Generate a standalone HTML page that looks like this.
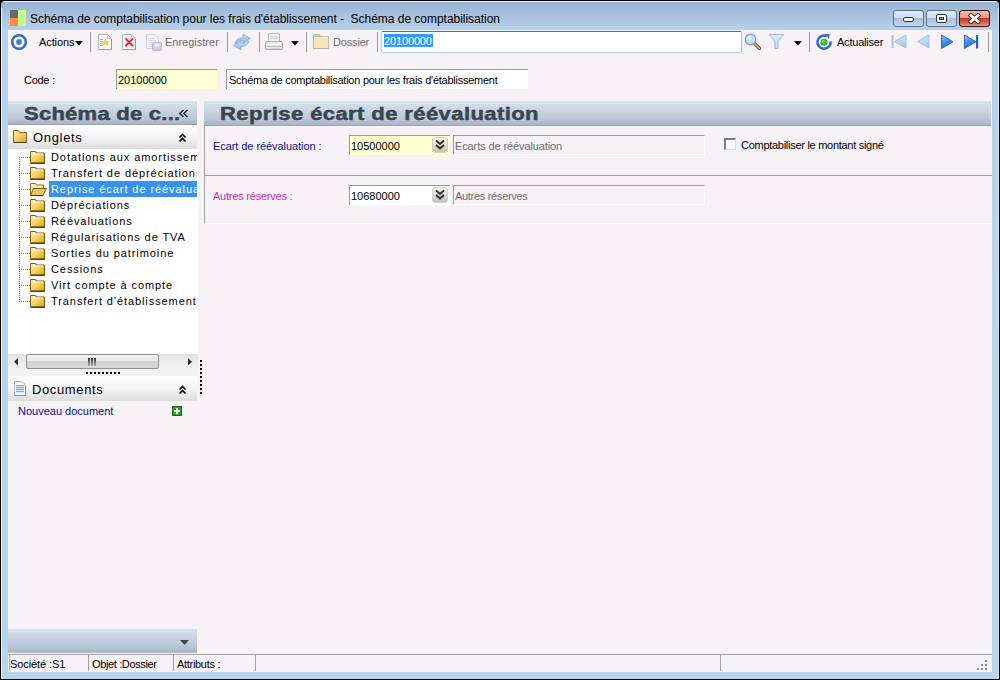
<!DOCTYPE html>
<html><head><meta charset="utf-8">
<style>
*{box-sizing:border-box;margin:0;padding:0}
html,body{width:1000px;height:680px;overflow:hidden;background:#000}
body{position:relative;font-family:"Liberation Sans",sans-serif;font-size:11px;color:#000}
.a{position:absolute}
.t{position:absolute;white-space:pre;line-height:1}
#win{left:0;top:0;width:1000px;height:680px;background:#000;border-radius:5px 5px 0 0}
#frame{left:1px;top:1px;width:998px;height:678px;border-radius:4px 4px 0 0;
 background:linear-gradient(#e8f4fb 0,#e8f4fb 1px,#98b3d4 1px,#a4bedc 12px,#b9d1ea 29px,#bcd3ec 100%);}
#client{left:8px;top:30px;width:984px;height:642px;background:#f6f2f6}
.sep{position:absolute;width:1px;background:#9a9a9a;top:32px;height:20px}
.tb{position:absolute;top:36px;font-size:11.5px;line-height:12px}
</style></head><body>
<div id="win" class="a"></div>
<div id="frame" class="a"></div>
<!-- left white highlight line of frame -->
<div class="a" style="left:1px;top:8px;width:1px;height:671px;background:#f0f8ff"></div>
<div class="a" style="left:998px;top:8px;width:1px;height:671px;background:#c8ecf8"></div>
<div class="a" style="left:1px;top:678px;width:998px;height:1px;background:#a8dcee"></div>

<!-- app icon -->
<div class="a" style="left:10px;top:10px;width:8px;height:8px;background:#6b6b6b"></div>
<div class="a" style="left:10px;top:18px;width:8px;height:8px;background:#ff8a4a"></div>
<div class="a" style="left:18px;top:10px;width:8px;height:16px;background:#c4ff84"></div>
<div class="t" style="left:30px;top:13px;font-size:12px;color:#000;letter-spacing:-0.03px">Schéma de comptabilisation pour les frais d'établissement -  Schéma de comptabilisation</div>

<!-- caption buttons -->
<div class="a" style="left:893px;top:10px;width:31px;height:17px;border:1px solid #5c7190;border-radius:3px;background:linear-gradient(#e4eefa,#cddcee 45%,#a8c0dc 50%,#b4cae4 75%,#c8dcf0)"></div>
<div class="a" style="left:903px;top:17px;width:11px;height:5px;border:1px solid #2c3440;background:#fff;border-radius:2px"></div>
<div class="a" style="left:926px;top:10px;width:31px;height:17px;border:1px solid #5c7190;border-radius:3px;background:linear-gradient(#e4eefa,#cddcee 45%,#a8c0dc 50%,#b4cae4 75%,#c8dcf0)"></div>
<div class="a" style="left:936px;top:14px;width:11px;height:9px;border:1px solid #2c3440;background:#fff;border-radius:2px"></div>
<div class="a" style="left:939px;top:17px;width:5px;height:3px;border:1px solid #2c3440;background:#8898a8"></div>
<div class="a" style="left:959px;top:10px;width:31px;height:17px;border:1px solid #3c1414;border-radius:3px;background:linear-gradient(#f0b8a8,#e8988a 45%,#c83a20 50%,#d0604a 75%,#e89080)"></div>
<svg class="a" style="left:968px;top:13px" width="13" height="11" viewBox="0 0 13 11"><path d="M3 2.5 L10 8.5 M10 2.5 L3 8.5" stroke="#3a2020" stroke-width="4.6" stroke-linecap="square"/><path d="M3 2.5 L10 8.5 M10 2.5 L3 8.5" stroke="#fff" stroke-width="2.8" stroke-linecap="square"/></svg>

<div id="client" class="a"></div>

<!-- TOOLBAR -->
<svg class="a" style="left:10px;top:33px" width="18" height="18" viewBox="0 0 18 18"><circle cx="9" cy="9" r="6.8" fill="#fff" stroke="#3a6cc0" stroke-width="2.6"/><circle cx="9" cy="9" r="2.9" fill="#3c7ede"/></svg>
<div class="tb" style="left:39px;font-size:11px;letter-spacing:-0.1px">Actions</div>
<svg class="a" style="left:75px;top:41px" width="9" height="6"><path d="M0 0h8l-4 4.5z" fill="#000"/></svg>
<div class="sep" style="left:90px"></div>
<div class="tb" style="left:165px;color:#6d6d6d;font-size:11px;letter-spacing:0px">Enregistrer</div>
<div class="sep" style="left:227px"></div>
<div class="sep" style="left:259px"></div>
<svg class="a" style="left:291px;top:41px" width="9" height="6"><path d="M0 0h8l-4 4.5z" fill="#000"/></svg>
<div class="sep" style="left:306px"></div>
<div class="tb" style="left:333px;color:#6d6d6d;font-size:11px;letter-spacing:-0.17px">Dossier</div>
<div class="sep" style="left:377px"></div>
<!-- search -->
<div class="a" style="left:380px;top:30px;width:363px;height:24px;border:1px solid #e4f2fa;border-radius:2px"></div><div class="a" style="left:381px;top:31px;width:361px;height:22px;background:#fff;border:1px solid #c4c8cc;border-top-color:#5d6f87;border-right-color:#a8c0d4;border-bottom-color:#b4d2e6;border-radius:2px"></div>
<div class="a" style="left:384px;top:34px;width:49px;height:13px;background:#3399ff"></div>
<div class="t" style="left:384px;top:36px;color:#fff;font-size:11px;letter-spacing:-0.14px">20100000</div>
<svg class="a" style="left:794px;top:41px" width="9" height="6"><path d="M0 0h8l-4 4.5z" fill="#000"/></svg>
<div class="sep" style="left:809px"></div>
<div class="tb" style="left:837px;font-size:11px;letter-spacing:-0.22px">Actualiser</div>
<div class="sep" style="left:988px"></div>
<!-- toolbar icons -->
<svg class="a" style="left:98px;top:34px" width="15" height="16" viewBox="0 0 15 16"><path d="M0.5 0.5 H9.5 L13.5 4.5 V15.5 H0.5 Z" fill="#f8faff" stroke="#b0b8cc"/><path d="M1 15.5 H14 M13.5 5 V15.5" stroke="#9a9a9a"/><path d="M9.5 0.5 V4.5 H13.5" fill="none" stroke="#c8d0e0"/><path d="M2 5.5h3 M2 7.5h3 M2 9.5h3 M2 11.5h3" stroke="#98b0e0"/><path d="M7.5 5 L8.6 7.3 L11 7.5 L9.2 9.1 L9.8 11.5 L7.5 10.3 L5.2 11.5 L5.8 9.1 L4 7.5 L6.4 7.3 Z" fill="#f0e040" stroke="#d8c428" stroke-width="0.5"/></svg>
<svg class="a" style="left:122px;top:34px" width="15" height="16" viewBox="0 0 15 16"><path d="M0.5 0.5 H9.5 L13.5 4.5 V15.5 H0.5 Z" fill="#f8faff" stroke="#b0b8cc"/><path d="M1 15.5 H14 M13.5 5 V15.5" stroke="#9a9a9a"/><path d="M9.5 0.5 V4.5 H13.5" fill="none" stroke="#c8d0e0"/><path d="M4 5 L10.5 11.5 M10.5 5 L4 11.5" stroke="#f6b0b0" stroke-width="3.4" stroke-linecap="round"/><path d="M4 5 L10.5 11.5 M10.5 5 L4 11.5" stroke="#d41818" stroke-width="1.3" stroke-linecap="round"/></svg>
<svg class="a" style="left:146px;top:34px" width="17" height="17" viewBox="0 0 17 17"><path d="M0.5 0.5 H9 L12.5 4 V14.5 H0.5 Z" fill="#f6f6fc" stroke="#d4d4e0"/><path d="M2 4.5h7 M2 6.5h8 M2 8.5h5 M2 10.5h5 M2 12.5h5" stroke="#d8dcec"/><rect x="6.5" y="8.5" width="9" height="8" rx="1" fill="#d0cce8" stroke="#bcb6d8"/><rect x="8.5" y="9.5" width="5" height="3" fill="#f0f0fa"/></svg>
<svg class="a" style="left:232px;top:33px" width="20" height="18" viewBox="0 0 20 18"><defs><linearGradient id="rg" x1="0" y1="0" x2="0" y2="1"><stop offset="0" stop-color="#c4dcf6"/><stop offset="1" stop-color="#90b8e8"/></linearGradient></defs><path d="M3 10.5 Q4 5 11 4.5 V1 L18.5 5.5 L11 10 V7.5 Q7 7.5 5.5 10.5 Z" fill="url(#rg)" stroke="#8ca8d0" stroke-width="0.8" stroke-linejoin="round"/><path d="M17 8 Q16 13 9 13.5 V17 L1.5 12.5 L9 8 V10.5 Q13 10.5 14.5 8 Z" fill="url(#rg)" stroke="#8ca8d0" stroke-width="0.8" stroke-linejoin="round"/></svg>
<svg class="a" style="left:264px;top:32px" width="20" height="19" viewBox="0 0 20 19"><rect x="4.5" y="1.5" width="11" height="9" fill="#f4f4f4" stroke="#bcbcbc"/><path d="M6 4.5 H14 M6 6.5 H14" stroke="#d0d0d0"/><path d="M1.5 11 Q1.5 9.5 3 9.5 H17 Q18.5 9.5 18.5 11 V16 Q18.5 17.5 17 17.5 H3 Q1.5 17.5 1.5 16 Z" fill="#e8e8e8" stroke="#a8a8a8"/><path d="M3 12.5 H17" stroke="#fff" stroke-width="1.5"/><path d="M3 14.5 H17" stroke="#b8b8b8"/><path d="M3 16.5 H17" stroke="#d4d4d4"/></svg>
<svg class="a" style="left:313px;top:34px" width="16" height="15" viewBox="0 0 16 15"><path d="M0.5 3 V1 Q0.5 0.5 1 0.5 H6.5 L7.5 3 Z" fill="#d8d4cc" stroke="#c0bab0"/><rect x="0.5" y="2.5" width="15" height="12" fill="#f6e4bc" stroke="#bcb4a4"/><path d="M1 3.5 H15" stroke="#fcf2dc"/></svg>
<svg class="a" style="left:744px;top:33px" width="18" height="17" viewBox="0 0 18 17"><path d="M10.5 10.5 L15.5 15.5" stroke="#6a5020" stroke-width="3.2" stroke-linecap="round"/><path d="M10.5 10.5 L15.5 15.5" stroke="#d8b870" stroke-width="1.6" stroke-linecap="round"/><circle cx="6.5" cy="6.5" r="5.3" fill="#c8dcf8" stroke="#7c9cd0" stroke-width="1.2"/><circle cx="5.5" cy="5" r="2" fill="#eef6ff"/></svg>
<svg class="a" style="left:769px;top:34px" width="16" height="16" viewBox="0 0 16 16"><path d="M0.5 0.5 H14.5 L9 7.5 V14.5 H6 V7.5 Z" fill="#d4e4fa" stroke="#9cb4d8"/><path d="M2.5 1.5 H12.5" stroke="#eef4ff"/></svg>
<svg class="a" style="left:815px;top:33px" width="18" height="18" viewBox="0 0 18 18"><circle cx="9" cy="9.2" r="5.2" fill="#e4f8fc"/><path d="M11.8 3.2 A6.6 6.6 0 1 0 15.6 8.4" fill="none" stroke="#3a68c4" stroke-width="2.5"/><path d="M10 0.8 L14.6 1.2 L14 5.8 Z" fill="#3a68c4"/><circle cx="9" cy="9.3" r="3.5" fill="#34b834"/><circle cx="8.4" cy="8.5" r="1.4" fill="#7cdc7c"/></svg>
<!-- nav -->
<svg class="a" style="left:890px;top:33px" width="90" height="18" viewBox="0 0 90 18"><defs><linearGradient id="ng" x1="0" y1="0" x2="0.3" y2="1"><stop offset="0" stop-color="#9ccef8"/><stop offset="0.5" stop-color="#4494ea"/><stop offset="1" stop-color="#2a6cd0"/></linearGradient><linearGradient id="nl" x1="0" y1="0" x2="0.3" y2="1"><stop offset="0" stop-color="#dcecfc"/><stop offset="1" stop-color="#a8c8f0"/></linearGradient></defs><rect x="1.5" y="2" width="2" height="13" fill="#a8c0e4"/><path d="M16 2 V15 L4.5 8.5 Z" fill="url(#nl)" stroke="#a4c0e4"/><path d="M39 2 V15 L27.5 8.5 Z" fill="url(#nl)" stroke="#a4c0e4"/><path d="M51.5 2 V15.5 L63 8.75 Z" fill="url(#ng)" stroke="#2c68c4"/><path d="M74.5 2 V15.5 L86 8.75 Z" fill="url(#ng)" stroke="#2c68c4"/><rect x="86" y="2" width="2.2" height="13.5" fill="#2c5cb8"/></svg>


<!-- CODE ROW -->
<div class="t" style="left:24px;top:75px;font-size:11px;letter-spacing:-0.28px">Code :</div>
<div class="a" style="left:116px;top:69px;width:101px;height:20px;background:#ffffd2;border-top:1px solid #9a9a9a;border-left:1px solid #9a9a9a"></div>
<div class="t" style="left:118px;top:75px;font-size:11px">20100000</div>
<div class="a" style="left:226px;top:69px;width:302px;height:20px;background:#fff;border-top:1px solid #9a9a9a;border-left:1px solid #9a9a9a"></div>
<div class="t" style="left:229px;top:75px;font-size:11px;letter-spacing:-0.25px">Schéma de comptabilisation pour les frais d'établissement</div>


<!-- LEFT PANEL -->
<div class="a" style="left:8px;top:100px;width:189px;height:1px;background:#f4f6fc"></div><div class="a" style="left:8px;top:101px;width:189px;height:24px;background:linear-gradient(#dae2ee 0,#ccdae8 25%,#bcc8d6 70%,#a8b6c6 95%,#9ea2b2 95%)"></div>
<div class="t" style="left:24px;top:104px;font-weight:bold;color:#3a4550;-webkit-text-stroke:0.5px #3a4550;font-size:19px;letter-spacing:0.2px;transform:scaleX(1.16);transform-origin:0 0">Schéma de c...</div>
<svg class="a" style="left:178px;top:109px" width="11" height="10" viewBox="0 0 11 10"><path d="M5.5 1 L1.8 4.5 L5.5 8 M9.5 1 L5.8 4.5 L9.5 8" fill="none" stroke="#2c3640" stroke-width="1.5"/></svg>
<div class="a" style="left:8px;top:125px;width:189px;height:24px;background:linear-gradient(#fff,#f4f4f4 50%,#dcdcdc)"></div>
<div class="t" style="left:33px;top:131px;font-size:13px;letter-spacing:0.67px">Onglets</div>
<div class="a" style="left:8px;top:149px;width:190px;height:205px;background:#fff"></div>
<div class="a" style="left:49px;top:181px;width:148px;height:16px;background:#3592f0"></div>
<div id="tree">
<div class="a" style="left:19px;top:157px;width:1px;height:145px;background:repeating-linear-gradient(#6c6c6c 0 1px,transparent 1px 2px)"></div>
<div class="a" style="left:20px;top:157px;width:10px;height:1px;background:repeating-linear-gradient(90deg,transparent 0 1px,#6c6c6c 1px 2px)"></div>
<svg class="a" style="left:30px;top:151px" width="16" height="13" viewBox="0 0 16 13"><defs><linearGradient id="fg0" x1="0" y1="0" x2="1" y2="1"><stop offset="0" stop-color="#fff2b8"/><stop offset="0.5" stop-color="#f6cf5a"/><stop offset="1" stop-color="#d89a20"/></linearGradient></defs><path d="M0.5 2.5 V1 Q0.5 0.5 1 0.5 H5.5 L6.5 2 H14.5 V12.5 H0.5 Z" fill="url(#fg0)" stroke="#7a5a1a" stroke-width="1"/><path d="M1 12 H15" stroke="#3a2a0a" stroke-width="1"/><path d="M1.5 3 H13.5" stroke="#fff8d8" stroke-width="1"/></svg>
<div class="t" style="left:51px;top:152px;width:146px;overflow:hidden;font-size:11px;letter-spacing:0.92px;color:#000">Dotations aux amortissements</div>
<div class="a" style="left:20px;top:173px;width:10px;height:1px;background:repeating-linear-gradient(90deg,transparent 0 1px,#6c6c6c 1px 2px)"></div>
<svg class="a" style="left:30px;top:167px" width="16" height="13" viewBox="0 0 16 13"><defs><linearGradient id="fg1" x1="0" y1="0" x2="1" y2="1"><stop offset="0" stop-color="#fff2b8"/><stop offset="0.5" stop-color="#f6cf5a"/><stop offset="1" stop-color="#d89a20"/></linearGradient></defs><path d="M0.5 2.5 V1 Q0.5 0.5 1 0.5 H5.5 L6.5 2 H14.5 V12.5 H0.5 Z" fill="url(#fg1)" stroke="#7a5a1a" stroke-width="1"/><path d="M1 12 H15" stroke="#3a2a0a" stroke-width="1"/><path d="M1.5 3 H13.5" stroke="#fff8d8" stroke-width="1"/></svg>
<div class="t" style="left:51px;top:168px;width:146px;overflow:hidden;font-size:11px;letter-spacing:0.92px;color:#000">Transfert de dépréciations</div>
<div class="a" style="left:20px;top:189px;width:10px;height:1px;background:repeating-linear-gradient(90deg,transparent 0 1px,#6c6c6c 1px 2px)"></div>
<svg class="a" style="left:30px;top:183px" width="17" height="13" viewBox="0 0 17 13"><path d="M0.5 12.5 V1 Q0.5 0.5 1 0.5 H5.5 L6.5 2 H13.5 V5" fill="#fbeeb0" stroke="#8a6a2a" stroke-width="1"/><path d="M0.5 12.5 L3.5 5.5 H16.5 L13 12.5 Z" fill="#f2c450" stroke="#7a5a1a" stroke-width="1"/><path d="M1 12.5 H13" stroke="#3a2a0a" stroke-width="1"/></svg>
<div class="t" style="left:51px;top:184px;width:146px;overflow:hidden;color:#fff;font-size:11px;letter-spacing:0.92px">Reprise écart de réévaluation</div>
<div class="a" style="left:20px;top:205px;width:10px;height:1px;background:repeating-linear-gradient(90deg,transparent 0 1px,#6c6c6c 1px 2px)"></div>
<svg class="a" style="left:30px;top:199px" width="16" height="13" viewBox="0 0 16 13"><defs><linearGradient id="fg3" x1="0" y1="0" x2="1" y2="1"><stop offset="0" stop-color="#fff2b8"/><stop offset="0.5" stop-color="#f6cf5a"/><stop offset="1" stop-color="#d89a20"/></linearGradient></defs><path d="M0.5 2.5 V1 Q0.5 0.5 1 0.5 H5.5 L6.5 2 H14.5 V12.5 H0.5 Z" fill="url(#fg3)" stroke="#7a5a1a" stroke-width="1"/><path d="M1 12 H15" stroke="#3a2a0a" stroke-width="1"/><path d="M1.5 3 H13.5" stroke="#fff8d8" stroke-width="1"/></svg>
<div class="t" style="left:51px;top:200px;width:146px;overflow:hidden;font-size:11px;letter-spacing:0.92px;color:#000">Dépréciations</div>
<div class="a" style="left:20px;top:221px;width:10px;height:1px;background:repeating-linear-gradient(90deg,transparent 0 1px,#6c6c6c 1px 2px)"></div>
<svg class="a" style="left:30px;top:215px" width="16" height="13" viewBox="0 0 16 13"><defs><linearGradient id="fg4" x1="0" y1="0" x2="1" y2="1"><stop offset="0" stop-color="#fff2b8"/><stop offset="0.5" stop-color="#f6cf5a"/><stop offset="1" stop-color="#d89a20"/></linearGradient></defs><path d="M0.5 2.5 V1 Q0.5 0.5 1 0.5 H5.5 L6.5 2 H14.5 V12.5 H0.5 Z" fill="url(#fg4)" stroke="#7a5a1a" stroke-width="1"/><path d="M1 12 H15" stroke="#3a2a0a" stroke-width="1"/><path d="M1.5 3 H13.5" stroke="#fff8d8" stroke-width="1"/></svg>
<div class="t" style="left:51px;top:216px;width:146px;overflow:hidden;font-size:11px;letter-spacing:0.92px;color:#000">Réévaluations</div>
<div class="a" style="left:20px;top:237px;width:10px;height:1px;background:repeating-linear-gradient(90deg,transparent 0 1px,#6c6c6c 1px 2px)"></div>
<svg class="a" style="left:30px;top:231px" width="16" height="13" viewBox="0 0 16 13"><defs><linearGradient id="fg5" x1="0" y1="0" x2="1" y2="1"><stop offset="0" stop-color="#fff2b8"/><stop offset="0.5" stop-color="#f6cf5a"/><stop offset="1" stop-color="#d89a20"/></linearGradient></defs><path d="M0.5 2.5 V1 Q0.5 0.5 1 0.5 H5.5 L6.5 2 H14.5 V12.5 H0.5 Z" fill="url(#fg5)" stroke="#7a5a1a" stroke-width="1"/><path d="M1 12 H15" stroke="#3a2a0a" stroke-width="1"/><path d="M1.5 3 H13.5" stroke="#fff8d8" stroke-width="1"/></svg>
<div class="t" style="left:51px;top:232px;width:146px;overflow:hidden;font-size:11px;letter-spacing:0.92px;color:#000">Régularisations de TVA</div>
<div class="a" style="left:20px;top:253px;width:10px;height:1px;background:repeating-linear-gradient(90deg,transparent 0 1px,#6c6c6c 1px 2px)"></div>
<svg class="a" style="left:30px;top:247px" width="16" height="13" viewBox="0 0 16 13"><defs><linearGradient id="fg6" x1="0" y1="0" x2="1" y2="1"><stop offset="0" stop-color="#fff2b8"/><stop offset="0.5" stop-color="#f6cf5a"/><stop offset="1" stop-color="#d89a20"/></linearGradient></defs><path d="M0.5 2.5 V1 Q0.5 0.5 1 0.5 H5.5 L6.5 2 H14.5 V12.5 H0.5 Z" fill="url(#fg6)" stroke="#7a5a1a" stroke-width="1"/><path d="M1 12 H15" stroke="#3a2a0a" stroke-width="1"/><path d="M1.5 3 H13.5" stroke="#fff8d8" stroke-width="1"/></svg>
<div class="t" style="left:51px;top:248px;width:146px;overflow:hidden;font-size:11px;letter-spacing:0.92px;color:#000">Sorties du patrimoine</div>
<div class="a" style="left:20px;top:269px;width:10px;height:1px;background:repeating-linear-gradient(90deg,transparent 0 1px,#6c6c6c 1px 2px)"></div>
<svg class="a" style="left:30px;top:263px" width="16" height="13" viewBox="0 0 16 13"><defs><linearGradient id="fg7" x1="0" y1="0" x2="1" y2="1"><stop offset="0" stop-color="#fff2b8"/><stop offset="0.5" stop-color="#f6cf5a"/><stop offset="1" stop-color="#d89a20"/></linearGradient></defs><path d="M0.5 2.5 V1 Q0.5 0.5 1 0.5 H5.5 L6.5 2 H14.5 V12.5 H0.5 Z" fill="url(#fg7)" stroke="#7a5a1a" stroke-width="1"/><path d="M1 12 H15" stroke="#3a2a0a" stroke-width="1"/><path d="M1.5 3 H13.5" stroke="#fff8d8" stroke-width="1"/></svg>
<div class="t" style="left:51px;top:264px;width:146px;overflow:hidden;font-size:11px;letter-spacing:0.92px;color:#000">Cessions</div>
<div class="a" style="left:20px;top:285px;width:10px;height:1px;background:repeating-linear-gradient(90deg,transparent 0 1px,#6c6c6c 1px 2px)"></div>
<svg class="a" style="left:30px;top:279px" width="16" height="13" viewBox="0 0 16 13"><defs><linearGradient id="fg8" x1="0" y1="0" x2="1" y2="1"><stop offset="0" stop-color="#fff2b8"/><stop offset="0.5" stop-color="#f6cf5a"/><stop offset="1" stop-color="#d89a20"/></linearGradient></defs><path d="M0.5 2.5 V1 Q0.5 0.5 1 0.5 H5.5 L6.5 2 H14.5 V12.5 H0.5 Z" fill="url(#fg8)" stroke="#7a5a1a" stroke-width="1"/><path d="M1 12 H15" stroke="#3a2a0a" stroke-width="1"/><path d="M1.5 3 H13.5" stroke="#fff8d8" stroke-width="1"/></svg>
<div class="t" style="left:51px;top:280px;width:146px;overflow:hidden;font-size:11px;letter-spacing:0.92px;color:#000">Virt compte à compte</div>
<div class="a" style="left:20px;top:301px;width:10px;height:1px;background:repeating-linear-gradient(90deg,transparent 0 1px,#6c6c6c 1px 2px)"></div>
<svg class="a" style="left:30px;top:295px" width="16" height="13" viewBox="0 0 16 13"><defs><linearGradient id="fg9" x1="0" y1="0" x2="1" y2="1"><stop offset="0" stop-color="#fff2b8"/><stop offset="0.5" stop-color="#f6cf5a"/><stop offset="1" stop-color="#d89a20"/></linearGradient></defs><path d="M0.5 2.5 V1 Q0.5 0.5 1 0.5 H5.5 L6.5 2 H14.5 V12.5 H0.5 Z" fill="url(#fg9)" stroke="#7a5a1a" stroke-width="1"/><path d="M1 12 H15" stroke="#3a2a0a" stroke-width="1"/><path d="M1.5 3 H13.5" stroke="#fff8d8" stroke-width="1"/></svg>
<div class="t" style="left:51px;top:296px;width:146px;overflow:hidden;font-size:11px;letter-spacing:0.92px;color:#000">Transfert d'établissement</div>
</div>
<!-- scrollbar -->
<div class="a" style="left:8px;top:354px;width:190px;height:16px;background:linear-gradient(#e4e4e4,#f2f2f2)"></div>
<div class="a" style="left:26px;top:354px;width:133px;height:15px;border:1px solid #8e8f8f;border-radius:2px;background:linear-gradient(#f4f4f4,#e4e4e4 50%,#d4d4d4 50%,#d8d8d8)"></div>
<div class="a" style="left:8px;top:370px;width:190px;height:6px;background:#f2f2f2"></div>
<div class="a" style="left:8px;top:376px;width:189px;height:25px;background:linear-gradient(#fff,#f4f4f4 50%,#dcdcdc)"></div>
<div class="t" style="left:32px;top:383px;font-size:13px;letter-spacing:0.62px">Documents</div>
<div class="t" style="left:18px;top:406px;font-size:11px;color:#0c0c90">Nouveau document</div>

<div class="a" style="left:8px;top:629px;width:189px;height:24px;background:linear-gradient(#d8e2ee,#bccadb 60%,#a8b6c6)"></div>
<svg class="a" style="left:180px;top:640px" width="9" height="6"><path d="M0 0h9l-4.5 5z" fill="#3a4550"/></svg>

<!-- RIGHT PANEL -->
<div class="a" style="left:204px;top:100px;width:787px;height:1px;background:#f4f6fc"></div><div class="a" style="left:204px;top:101px;width:787px;height:25px;background:linear-gradient(#dae2ee 0,#ccdae8 25%,#bcc8d6 70%,#a8b6c6 95%,#9ea2b2 95%)"></div>
<div class="t" style="left:220px;top:104px;font-size:19px;font-weight:bold;color:#3a4550;-webkit-text-stroke:0.5px #3a4550;letter-spacing:0.34px;transform:scaleX(1.16);transform-origin:0 0">Reprise écart de réévaluation</div>
<div class="a" style="left:204px;top:125px;width:788px;height:51px;border-left:1px solid #a0a0a0;border-bottom:1px solid #a0a0a0"></div>
<div class="a" style="left:204px;top:176px;width:788px;height:48px;border-left:1px solid #a0a0a0;border-bottom:1px solid #fff"></div>
<div class="t" style="left:213px;top:141px;color:#10108a;font-size:11px;letter-spacing:-0.07px">Ecart de réévaluation :</div>
<div class="a" style="left:349px;top:135px;width:101px;height:20px;background:#ffffd2;border-top:1px solid #9a9a9a;border-left:1px solid #9a9a9a"></div>
<div class="t" style="left:351px;top:141px;font-size:11px">10500000</div>
<div class="a" style="left:432px;top:137px;width:16px;height:16px;border:1px solid #d4d4a8;border-radius:3px;background:linear-gradient(#fbfbe8,#c4c4b4)"></div><svg class="a" style="left:435px;top:139px" width="10" height="11" viewBox="0 0 10 11"><path d="M1 1.5 L5 5 L9 1.5 M1 6 L5 9.5 L9 6" fill="none" stroke="#2e2e22" stroke-width="2"/></svg>

<div class="a" style="left:453px;top:135px;width:252px;height:20px;background:#f6f2f6;border-top:1px solid #9a9a9a;border-left:1px solid #9a9a9a;border-right:1px solid #fff;border-bottom:1px solid #fff"></div>
<div class="t" style="left:455px;top:141px;color:#6d6d6d;font-size:11px;letter-spacing:-0.11px">Ecarts de réévaluation</div>
<div class="a" style="left:724px;top:138px;width:12px;height:12px;background:#f8f8f8;border-style:solid;border-width:2px 1px 1px 2px;border-color:#7c7c7c #dcdcdc #dcdcdc #7c7c7c"></div>
<div class="t" style="left:741px;top:140px;font-size:11px;letter-spacing:-0.28px">Comptabiliser le montant signé</div>
<div class="t" style="left:213px;top:191px;color:#c030c0;font-size:11px;letter-spacing:-0.22px">Autres réserves :</div>
<div class="a" style="left:349px;top:185px;width:101px;height:20px;background:#fff;border-top:1px solid #9a9a9a;border-left:1px solid #9a9a9a"></div>
<div class="t" style="left:351px;top:191px;font-size:11px">10680000</div>
<div class="a" style="left:432px;top:187px;width:16px;height:16px;border:1px solid #d0d0d0;border-radius:3px;background:linear-gradient(#f6f6f6,#c0c0c0)"></div><svg class="a" style="left:435px;top:189px" width="10" height="11" viewBox="0 0 10 11"><path d="M1 1.5 L5 5 L9 1.5 M1 6 L5 9.5 L9 6" fill="none" stroke="#2e2e22" stroke-width="2"/></svg>
<div class="a" style="left:453px;top:185px;width:252px;height:20px;background:#f6f2f6;border-top:1px solid #9a9a9a;border-left:1px solid #9a9a9a;border-right:1px solid #fff;border-bottom:1px solid #fff"></div>
<div class="t" style="left:455px;top:191px;color:#6d6d6d;font-size:11px;letter-spacing:-0.3px">Autres réserves</div>

<!-- STATUS BAR -->
<div class="a" style="left:8px;top:654px;width:984px;height:1px;background:#a0a0a0"></div>
<div class="t" style="left:10px;top:659px;font-size:11px;letter-spacing:-0.1px">Société :S1</div>
<div class="t" style="left:92px;top:659px;font-size:11px;letter-spacing:-0.37px">Objet :Dossier</div>
<div class="t" style="left:177px;top:659px;font-size:11px;letter-spacing:-0.3px">Attributs :</div>
<div class="a" style="left:9px;top:655px;width:1px;height:16px;background:#a0a0a0"></div>
<div class="a" style="left:88px;top:655px;width:1px;height:16px;background:#a0a0a0"></div>
<div class="a" style="left:173px;top:655px;width:1px;height:16px;background:#a0a0a0"></div>
<div class="a" style="left:255px;top:655px;width:1px;height:16px;background:#a0a0a0"></div>
<div class="a" style="left:720px;top:655px;width:1px;height:16px;background:#a0a0a0"></div>

<svg class="a" style="left:13px;top:130px" width="15" height="13" viewBox="0 0 15 13"><defs><linearGradient id="fgo" x1="0" y1="0" x2="1" y2="1"><stop offset="0" stop-color="#fff0b0"/><stop offset="0.55" stop-color="#f4c458"/><stop offset="1" stop-color="#e0a030"/></linearGradient></defs><path d="M0.5 12.5 V1 Q0.5 0.5 1 0.5 H5.5 L6.5 2.5 H13.5 V12.5 Z" fill="url(#fgo)" stroke="#8a6a2a"/><path d="M1 12.5 H14" stroke="#4a3a1a"/></svg>
<svg class="a" style="left:178px;top:133px" width="10" height="10" viewBox="0 0 10 10"><path d="M1.5 4.5 L4.5 1.5 L7.5 4.5 M1.5 8.5 L4.5 5.5 L7.5 8.5" fill="none" stroke="#000" stroke-width="1.6"/></svg>
<svg class="a" style="left:178px;top:385px" width="10" height="10" viewBox="0 0 10 10"><path d="M1.5 4.5 L4.5 1.5 L7.5 4.5 M1.5 8.5 L4.5 5.5 L7.5 8.5" fill="none" stroke="#000" stroke-width="1.6"/></svg>
<svg class="a" style="left:14px;top:381px" width="13" height="16" viewBox="0 0 13 16"><path d="M0.5 0.5 H8 L11.5 4 V14.5 H0.5 Z" fill="#f4f8ff" stroke="#a8b0c8"/><path d="M1 14.5 H12 M11.5 4.5 V14.5" stroke="#8890a0"/><rect x="2" y="4" width="8" height="8" fill="#dfe8fb"/><path d="M2 4.5 H10 M2 6.5 H10 M2 8.5 H10 M2 10.5 H10" stroke="#7c9cec" stroke-width="1"/></svg>
<!-- scrollbar details -->
<svg class="a" style="left:14px;top:358px" width="5" height="8" viewBox="0 0 5 8"><path d="M4 0 V7.5 L0 3.75 Z" fill="#303030"/></svg>
<svg class="a" style="left:188px;top:358px" width="5" height="8" viewBox="0 0 5 8"><path d="M0 0 V7.5 L4 3.75 Z" fill="#303030"/></svg>
<div class="a" style="left:88px;top:358px;width:1.5px;height:8px;background:linear-gradient(#303030,#b0b0b0)"></div>
<div class="a" style="left:91px;top:358px;width:1.5px;height:8px;background:linear-gradient(#303030,#b0b0b0)"></div>
<div class="a" style="left:94px;top:358px;width:1.5px;height:8px;background:linear-gradient(#303030,#b0b0b0)"></div>
<div class="a" style="left:86px;top:372px;width:35px;height:2px;background:repeating-linear-gradient(90deg,#000 0 2px,transparent 2px 4px)"></div>
<div class="a" style="left:200px;top:360px;width:2px;height:34px;background:repeating-linear-gradient(#000 0 2px,transparent 2px 4px)"></div>
<!-- plus -->
<svg class="a" style="left:172px;top:406px" width="10" height="10" viewBox="0 0 10 10"><rect x="0.5" y="0.5" width="9" height="9" fill="#28a028" stroke="#1a6a1a"/><path d="M5 2 V8 M2 5 H8" stroke="#fff" stroke-width="2"/></svg>
<!-- resize grip -->
<div class="a" style="left:985px;top:660px;width:2px;height:2px;background:#8a8a8a"></div>
<div class="a" style="left:981px;top:664px;width:2px;height:2px;background:#8a8a8a"></div>
<div class="a" style="left:985px;top:664px;width:2px;height:2px;background:#8a8a8a"></div>
<div class="a" style="left:977px;top:668px;width:2px;height:2px;background:#8a8a8a"></div>
<div class="a" style="left:981px;top:668px;width:2px;height:2px;background:#8a8a8a"></div>
<div class="a" style="left:985px;top:668px;width:2px;height:2px;background:#8a8a8a"></div>
</body></html>
